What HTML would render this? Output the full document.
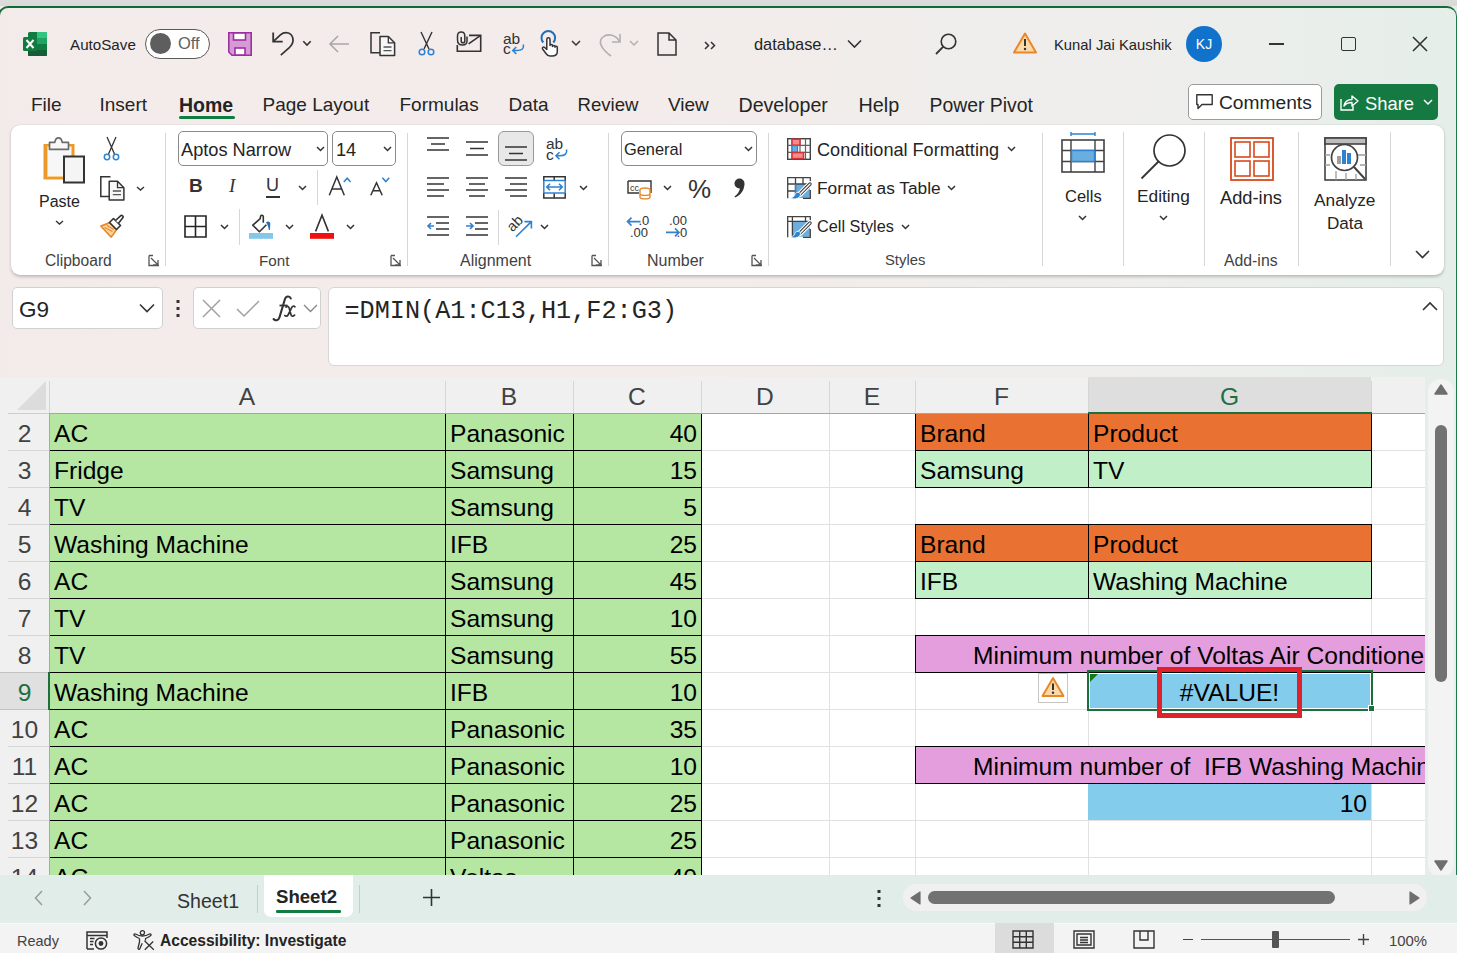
<!DOCTYPE html>
<html><head><meta charset="utf-8">
<style>
*{margin:0;padding:0;box-sizing:border-box}
html,body{width:1457px;height:953px;overflow:hidden;background:#f1eeec;font-family:"Liberation Sans",sans-serif;color:#242424}
.a{position:absolute;white-space:nowrap}
#bg{position:absolute;left:0;top:0;width:1457px;height:953px;background:linear-gradient(90deg,#f3ebea 0%,#f3ecea 12%,#f3ecea 45%,#f0edeb 62%,#eeeeec 80%,#eaeeeb 90%,#e5eee9 100%)}
#topband{position:absolute;left:0;top:0;width:1457px;height:6px;background:linear-gradient(#dddcd9,#d9d9dc)}
#frame{position:absolute;left:-2px;top:6px;width:1459px;height:960px;border:2px solid #116b35;border-right:1.5px solid #1f7a48;border-radius:10px 10px 0 0;border-bottom:none}
#ribbon{position:absolute;left:11px;top:125px;width:1433px;height:150px;background:#fff;border-radius:9px;box-shadow:0 1.5px 3px rgba(0,0,0,.2),0 0 1px rgba(0,0,0,.12)}
.tab{position:absolute;top:93.5px;font-size:19px;color:#242424}
.sep{position:absolute;width:1px;background:#d6d6d6}
.glabel{position:absolute;top:252px;font-size:15.5px;color:#424242}
.chev{position:absolute}
svg{position:absolute;overflow:visible}
.ct{font-size:24.6px;line-height:37px;padding-top:2px;color:#000}
.hdr{font-size:24.6px;line-height:37px;padding-top:2px}
</style></head><body>
<div id="bg"></div>
<div id="topband"></div>
<div id="frame"></div>

<!-- Title bar -->
<svg style="left:23px;top:32px" width="24" height="24" viewBox="0 0 24 24">
  <rect x="5" y="0" width="19" height="24" rx="1.5" fill="#107c41"/>
  <rect x="14" y="0" width="10" height="6" fill="#33c481"/>
  <rect x="14" y="6" width="10" height="6" fill="#21a366"/>
  <rect x="14" y="12" width="10" height="6" fill="#107c41"/>
  <rect x="5" y="18" width="19" height="6" rx="1" fill="#185c37"/>
  <rect x="0" y="5" width="14" height="14" rx="1.5" fill="#107c41"/>
  <path d="M3.5 8 L10.5 16 M10.5 8 L3.5 16" stroke="#fff" stroke-width="2"/>
</svg>
<div class="a" style="left:70px;top:35.5px;font-size:15.2px;color:#242424">AutoSave</div>
<div class="a" style="left:145px;top:29px;width:65px;height:30px;border:1px solid #5a5a5a;border-radius:15px;background:#fff"></div>
<div class="a" style="left:150px;top:33px;width:21px;height:21px;border-radius:50%;background:#5e5e5e"></div>
<div class="a" style="left:178px;top:34px;font-size:16.5px;color:#616161">Off</div>
<svg style="left:228px;top:32px" width="24" height="24" viewBox="0 0 24 24">
  <path d="M0.8 0.8 H23.2 V23.2 H4 L0.8 20 Z" fill="#d89ad6" stroke="#9b30a0" stroke-width="1.6"/>
  <rect x="5.5" y="1" width="12" height="7" fill="#fff" stroke="#9b30a0" stroke-width="1.6"/>
  <rect x="7" y="16" width="10" height="7" fill="#fff" stroke="#9b30a0" stroke-width="1.6"/>
</svg>
<svg style="left:272px;top:32px" width="24" height="25" viewBox="0 0 24 25"><path d="M1.2 0.5 V9.7 H10.7" fill="none" stroke="#333" stroke-width="1.8"/><path d="M1.2 9.7 L8.4 2.8 C13 -1 21 0 21 8.5 C21 11.5 19.5 13.5 17 16 L8.8 23.2" fill="none" stroke="#333" stroke-width="1.7"/></svg>
<svg style="left:302px;top:40px" width="10" height="7" viewBox="0 0 10 7"><path d="M1.3 1.3 L5 5 L8.7 1.3" fill="none" stroke="#333" stroke-width="1.6"/></svg>
<svg style="left:328px;top:34px" width="22" height="20" viewBox="0 0 22 20"><path d="M21 10 H2 M10 2 L2 10 L10 18" fill="none" stroke="#a8a8a8" stroke-width="1.6"/></svg>
<svg style="left:370px;top:32px" width="26" height="25" viewBox="0 0 26 25"><path d="M10 0.8 H1 V20.8 H10" fill="none" stroke="#333" stroke-width="1.5"/><path d="M10 4.5 H18.3 L24.6 10.8 V23.6 H10 Z" fill="#f7f7f7" stroke="#333" stroke-width="1.5" stroke-linejoin="round"/><path d="M18.3 4.5 V10.8 H24.6" fill="none" stroke="#333" stroke-width="1.3"/><path d="M13.5 15 H21.5 M13.5 18.6 H21.5" stroke="#555" stroke-width="1.3"/></svg>
<svg style="left:418px;top:32px" width="17" height="24" viewBox="0 0 17 24">
  <path d="M3 0 L11 17 M14 0 L6 17" fill="none" stroke="#333" stroke-width="1.4"/>
  <circle cx="4" cy="20" r="2.8" fill="none" stroke="#2f82d0" stroke-width="1.5"/>
  <circle cx="13" cy="20" r="2.8" fill="none" stroke="#2f82d0" stroke-width="1.5"/>
</svg>
<svg style="left:456px;top:31px" width="26" height="22" viewBox="0 0 26 22"><path d="M1.3 14 V20.2 H24.7 V4.4 H13" fill="none" stroke="#333" stroke-width="1.6"/><path d="M12.6 12.8 L24 4.8" stroke="#333" stroke-width="1.6"/><path d="M11 5.5 V10 C11 13 9.5 14 6.5 14 C3.5 14 1.5 12 1.5 9 V5 C1.5 2.5 3 1 5.3 1 C7.5 1 8.8 2.5 8.8 5 V10 C8.8 11 8 11.8 7 11.8 C6 11.8 5.2 11 5.2 10 V6" fill="none" stroke="#333" stroke-width="1.5"/></svg>
<svg style="left:503px;top:32px" width="23" height="26" viewBox="0 0 23 26"><text x="0" y="11.6" font-size="15.5" font-family="Liberation Sans" fill="#333">ab</text><text x="0" y="22.4" font-size="15.5" font-family="Liberation Sans" fill="#333">c</text><path d="M20.3 12.5 C21.3 16.5 19 18.5 14 18.5 H10 M13.3 15 L9.8 18.5 L13.3 22" fill="none" stroke="#2f82d0" stroke-width="1.6"/></svg>
<svg style="left:539px;top:30px" width="20" height="27" viewBox="0 0 20 27"><path d="M4.3 12.5 A 6.8 6.8 0 1 1 14.3 12.5" fill="none" stroke="#1f6fb8" stroke-width="2"/><path d="M7.8 9.5 C7.8 7.3 11 7.3 11 9.5 V15.5 C11 14 13.5 14 13.5 15.5 V16.5 C13.5 15 16 15 16 16.5 V17.2 C16 15.8 18.3 15.8 18.3 17.3 V21.5 C18.3 24.5 16 26 13 26 H11 C9 26 8 25 7 23.5 L3.6 19 C2.8 17.8 4.4 16.4 5.7 17.5 L7.8 19.5 Z" fill="#fff" stroke="#333" stroke-width="1.5" stroke-linejoin="round"/></svg>
<svg style="left:571px;top:40px" width="10" height="6" viewBox="0 0 10 6"><path d="M1 1 L5 5 L9 1" fill="none" stroke="#333" stroke-width="1.5"/></svg>
<svg style="left:599px;top:32px" width="22" height="24" viewBox="0 0 22 24">
  <path d="M21 2 V10 H13" fill="none" stroke="#b0b0b0" stroke-width="1.6"/>
  <path d="M20.5 9.5 C17 3 9 1 4 5 C-1 9 1 16 12 24" fill="none" stroke="#b0b0b0" stroke-width="1.6"/>
</svg>
<svg style="left:629px;top:40px" width="10" height="6" viewBox="0 0 10 6"><path d="M1 1 L5 5 L9 1" fill="none" stroke="#b0b0b0" stroke-width="1.5"/></svg>
<svg style="left:657px;top:32px" width="20" height="24" viewBox="0 0 20 24">
  <path d="M1 1 H12 L19 8 V23 H1 Z M12 1 V8 H19" fill="none" stroke="#333" stroke-width="1.5"/>
</svg>
<svg style="left:704px;top:41px" width="12" height="9" viewBox="0 0 12 9"><path d="M1 1 L4.5 4.5 L1 8 M7 1 L10.5 4.5 L7 8" fill="none" stroke="#333" stroke-width="1.5"/></svg>
<div class="a" style="left:754px;top:35px;font-size:16.4px;color:#242424">database…</div>
<svg style="left:847px;top:39px" width="15" height="10" viewBox="0 0 15 10"><path d="M1 1.5 L7.5 8 L14 1.5" fill="none" stroke="#333" stroke-width="1.6"/></svg>
<svg style="left:935px;top:33px" width="22" height="22" viewBox="0 0 22 22">
  <circle cx="13.5" cy="8.5" r="7.3" fill="none" stroke="#333" stroke-width="1.6"/>
  <path d="M8.3 13.7 L1 21" stroke="#333" stroke-width="1.8"/>
</svg>
<svg style="left:1013px;top:32px" width="24" height="22" viewBox="0 0 24 22">
  <path d="M12 1.5 L23 20.5 H1 Z" fill="#fbd9a8" stroke="#e8882a" stroke-width="2" stroke-linejoin="round"/>
  <path d="M12 7 V14" stroke="#333" stroke-width="2"/><circle cx="12" cy="17" r="1.2" fill="#333"/>
</svg>
<div class="a" style="left:1054px;top:37px;font-size:14.8px;color:#242424">Kunal Jai Kaushik</div>
<div class="a" style="left:1186px;top:26px;width:36px;height:36px;border-radius:50%;background:#1172cc;color:#fff;font-size:14px;line-height:36px;text-align:center">KJ</div>
<div class="a" style="left:1269px;top:43px;width:15px;height:1.6px;background:#333"></div>
<div class="a" style="left:1341px;top:37px;width:15px;height:14px;border:1.6px solid #333;border-radius:2px"></div>
<svg style="left:1412px;top:36px" width="16" height="16" viewBox="0 0 16 16"><path d="M1 1 L15 15 M15 1 L1 15" stroke="#333" stroke-width="1.6"/></svg>

<!-- Comments / Share -->
<div class="a" style="left:1188px;top:84px;width:134px;height:36px;border:1px solid #9a9a9a;border-radius:5px;background:#fff"></div>
<svg style="left:1196px;top:94px" width="17" height="15" viewBox="0 0 17 15"><path d="M0.8 0.8 H16.2 V10.5 H6 L2 14.5 V10.5 H0.8 Z" fill="none" stroke="#333" stroke-width="1.4" stroke-linejoin="round"/></svg>
<div class="a" style="left:1219px;top:92px;font-size:19.2px;color:#242424">Comments</div>
<div class="a" style="left:1334px;top:84px;width:104px;height:36px;border-radius:5px;background:#157a42"></div>
<svg style="left:1340px;top:94px" width="19" height="17" viewBox="0 0 19 17">
  <path d="M1 5 V16 H13 V12" fill="none" stroke="#fff" stroke-width="1.4"/>
  <path d="M4 12 C5 7 8 5.5 12 5.5 V2 L18 7 L12 12 V8.5 C9 8.5 6 9.5 4 12 Z" fill="none" stroke="#fff" stroke-width="1.4" stroke-linejoin="round"/>
</svg>
<div class="a" style="left:1365px;top:92.5px;font-size:18.4px;color:#fff">Share</div>
<svg style="left:1423px;top:99px" width="10" height="6" viewBox="0 0 10 6"><path d="M1 1 L5 5 L9 1" fill="none" stroke="#fff" stroke-width="1.5"/></svg>

<!-- tabs -->
<div class="tab" style="left:31px">File</div>
<div class="tab" style="left:99.5px">Insert</div>
<div class="tab" style="left:179px;font-weight:bold;font-size:19.5px">Home</div>
<div class="a" style="left:179px;top:116px;width:56px;height:3px;background:#107c41;border-radius:2px"></div>
<div class="tab" style="left:262.5px">Page Layout</div>
<div class="tab" style="left:399.5px">Formulas</div>
<div class="tab" style="left:508.5px">Data</div>
<div class="tab" style="left:577.5px;font-size:18.6px">Review</div>
<div class="tab" style="left:668px">View</div>
<div class="tab" style="left:738.5px;font-size:19.6px">Developer</div>
<div class="tab" style="left:858.5px;font-size:19.8px">Help</div>
<div class="tab" style="left:929.5px;font-size:19.4px">Power Pivot</div>

<div id="ribbon"></div>
<!-- Ribbon content -->
<!-- Clipboard -->
<svg style="left:43px;top:137px" width="42" height="46" viewBox="0 0 42 46"><rect x="0.5" y="7" width="31" height="35.5" fill="#eb9a2a"/><rect x="4" y="9.5" width="24.5" height="30" fill="#f7f7f7"/><path d="M4.5 10 V39.5 H28" fill="none" stroke="#fcd08a" stroke-width="1"/><path d="M6.5 12.3 V5.3 H11.8 C12.3 2 13.3 0.8 15.5 0.8 C17.7 0.8 18.7 2 19.2 5.3 H25.5 V12.3 Z" fill="#f7f7f7" stroke="#6b6b6b" stroke-width="1.7" stroke-linejoin="round"/><rect x="21" y="19.5" width="20" height="26" fill="#f5f5f5" stroke="#333" stroke-width="2"/></svg>
<div class="a" style="left:39px;top:192.5px;font-size:16px;color:#242424">Paste</div>
<svg style="left:55px;top:220px" width="9" height="5" viewBox="0 0 9 5"><path d="M1 1 L4.5 4 L8 1" fill="none" stroke="#333" stroke-width="1.4"/></svg>
<svg style="left:103px;top:137px" width="17" height="24" viewBox="0 0 17 24">
  <path d="M4 0 L11.5 17 M13 0 L5.5 17" fill="none" stroke="#333" stroke-width="1.3"/>
  <circle cx="4" cy="20" r="2.7" fill="none" stroke="#2f82d0" stroke-width="1.5"/>
  <circle cx="13" cy="20" r="2.7" fill="none" stroke="#2f82d0" stroke-width="1.5"/>
</svg>
<svg style="left:100px;top:176px" width="25" height="25" viewBox="0 0 25 25"><path d="M10.5 0.8 H0.8 V20.4 H9" fill="none" stroke="#333" stroke-width="1.5"/><path d="M9.2 5.3 H17.5 L23.9 11.7 V23.9 H9.2 Z" fill="#f7f7f7" stroke="#333" stroke-width="1.5" stroke-linejoin="round"/><path d="M17.5 5.3 V11.7 H23.9" fill="none" stroke="#333" stroke-width="1.3"/><path d="M12.8 15 H21 M12.8 18.6 H21" stroke="#555" stroke-width="1.3"/></svg>
<svg style="left:136px;top:186px" width="9" height="5" viewBox="0 0 9 5"><path d="M1 1 L4.5 4 L8 1" fill="none" stroke="#333" stroke-width="1.4"/></svg>
<svg style="left:99px;top:214px" width="26" height="25" viewBox="0 0 26 25"><path d="M1.8 12 C5.5 11 8 10 10.5 8.5 L17.5 15.5 C16 18 14.5 21 12 23 Z" fill="#fcd59e" stroke="#e8882a" stroke-width="1.7" stroke-linejoin="round"/><path d="M5.5 13.5 L13.5 17.5 M8 11.5 L15 15.5" stroke="#e8882a" stroke-width="1.1"/><path d="M10.5 8.5 L14.5 4.5 L21.5 11.5 L17.5 15.5 Z" fill="#fff" stroke="#333" stroke-width="1.6" stroke-linejoin="round"/><path d="M16.5 6.5 L21.8 1.6 C22.8 0.7 24.9 2.6 24 3.6 L19.5 9.2" fill="#fff" stroke="#333" stroke-width="1.6" stroke-linejoin="round"/></svg>
<div class="glabel" style="left:45px;font-size:15.6px">Clipboard</div>
<svg style="left:148px;top:255px" width="12" height="11" viewBox="0 0 12 11"><path d="M1 0.5 V10.5 H11 M1 0.5 H5 M3 3 L10 10 M10 5 V10 H5" fill="none" stroke="#555" stroke-width="1.3"/></svg>
<div class="sep" style="left:165px;top:133px;height:133px"></div>

<!-- Font -->
<div class="a" style="left:178px;top:131px;width:150px;height:35px;border:1px solid #8a8a8a;border-radius:5px;background:#fff"></div>
<div class="a" style="left:181px;top:140px;font-size:18.2px;color:#242424">Aptos Narrow</div>
<svg style="left:316px;top:146px" width="9" height="6" viewBox="0 0 9 6"><path d="M1 1 L4.5 4.5 L8 1" fill="none" stroke="#333" stroke-width="1.5"/></svg>
<div class="a" style="left:332px;top:131px;width:64px;height:35px;border:1px solid #8a8a8a;border-radius:5px;background:#fff"></div>
<div class="a" style="left:336px;top:140px;font-size:18.2px;color:#242424">14</div>
<svg style="left:383px;top:146px" width="9" height="6" viewBox="0 0 9 6"><path d="M1 1 L4.5 4.5 L8 1" fill="none" stroke="#333" stroke-width="1.5"/></svg>

<div class="a" style="left:189px;top:175px;font-size:19px;font-weight:bold;color:#333">B</div>
<div class="a" style="left:229px;top:175px;font-size:19px;font-style:italic;font-family:'Liberation Serif';color:#333">I</div>
<div class="a" style="left:266px;top:175px;font-size:18px;color:#333">U</div>
<div class="a" style="left:266px;top:196px;width:14px;height:1.5px;background:#333"></div>
<svg style="left:298px;top:185px" width="9" height="6" viewBox="0 0 9 6"><path d="M1 1 L4.5 4.5 L8 1" fill="none" stroke="#333" stroke-width="1.5"/></svg>
<div class="sep" style="left:317px;top:170px;height:35px"></div>
<svg style="left:320px;top:170px" width="75" height="30" viewBox="320 170 75 30"><path d="M329.3 195.2 L336.8 177 L344.3 195.2 M331.8 189 H341.8" fill="none" stroke="#333" stroke-width="1.5"/><path d="M343.8 182 L347.2 178.2 L350.6 182" fill="none" stroke="#2f82d0" stroke-width="1.5"/><path d="M370.8 195.2 L376.5 182.8 L382.2 195.2 M372.8 190.8 H380.2" fill="none" stroke="#333" stroke-width="1.5"/><path d="M382.4 177.8 L385.8 181.6 L389.2 177.8" fill="none" stroke="#2f82d0" stroke-width="1.5"/></svg>

<svg style="left:184px;top:215px" width="23" height="23" viewBox="0 0 23 23"><path d="M1 1 H22 V22 H1 Z M11.5 1 V22 M1 11.5 H22" fill="none" stroke="#242424" stroke-width="1.6"/></svg>
<svg style="left:220px;top:224px" width="9" height="6" viewBox="0 0 9 6"><path d="M1 1 L4.5 4.5 L8 1" fill="none" stroke="#333" stroke-width="1.5"/></svg>
<div class="sep" style="left:239px;top:209px;height:36px"></div>
<svg style="left:248px;top:214px" width="26" height="25" viewBox="0 0 26 25"><path d="M15.3 8.8 V2.6 C15.3 1 13.3 0.8 12.6 2.2 L12.2 4.6 L4.8 11.2 L11.4 17.8 L18.4 10.8" fill="none" stroke="#333" stroke-width="1.6" stroke-linejoin="round"/><path d="M18 8.5 C20 6.5 22.5 7.5 22.3 10.5 L21.8 16 L20.8 16 C20.5 13 19.8 11 18 8.5 Z" fill="#1c6fb8"/><rect x="1" y="19" width="24" height="5.8" fill="#83c8e8"/></svg>
<svg style="left:285px;top:224px" width="9" height="6" viewBox="0 0 9 6"><path d="M1 1 L4.5 4.5 L8 1" fill="none" stroke="#333" stroke-width="1.5"/></svg>
<svg style="left:310px;top:214px" width="25" height="25" viewBox="0 0 25 25"><path d="M5.6 17.4 L12 1.2 L18.4 17.4" fill="none" stroke="#333" stroke-width="1.6"/><rect x="0" y="19" width="24" height="5.8" fill="#f01010"/></svg>
<svg style="left:346px;top:224px" width="9" height="6" viewBox="0 0 9 6"><path d="M1 1 L4.5 4.5 L8 1" fill="none" stroke="#333" stroke-width="1.5"/></svg>
<div class="glabel" style="left:259px;font-size:15.2px">Font</div>
<svg style="left:390px;top:255px" width="12" height="11" viewBox="0 0 12 11"><path d="M1 0.5 V10.5 H11 M1 0.5 H5 M3 3 L10 10 M10 5 V10 H5" fill="none" stroke="#555" stroke-width="1.3"/></svg>
<div class="sep" style="left:407px;top:133px;height:133px"></div>

<!-- Alignment -->
<svg style="left:427px;top:137px" width="22" height="14" viewBox="0 0 22 14"><path d="M0 1 H22 M4 7 H18 M0 13 H22" stroke="#333" stroke-width="1.6"/></svg>
<svg style="left:466px;top:141px" width="22" height="15" viewBox="0 0 22 15"><path d="M0 1 H22 M4 7.5 H18 M0 14 H22" stroke="#333" stroke-width="1.6"/></svg>
<div class="a" style="left:498px;top:131px;width:36px;height:35px;border:1px solid #9a9a9a;border-radius:6px;background:#e8e8e8"></div>
<svg style="left:505px;top:146px" width="22" height="15" viewBox="0 0 22 15"><path d="M0 1 H22 M4 7.5 H18 M0 14 H22" stroke="#333" stroke-width="1.6"/></svg>
<svg style="left:546px;top:137px" width="23" height="26" viewBox="0 0 23 26"><text x="0" y="11.5" font-size="15.5" font-family="Liberation Sans" fill="#333">ab</text><text x="0" y="22.7" font-size="15.5" font-family="Liberation Sans" fill="#333">c</text><path d="M20.5 12.5 C21.5 16.5 19 18.8 14 18.8 H10 M13.5 15.3 L10 18.8 L13.5 22.3" fill="none" stroke="#2f82d0" stroke-width="1.6"/></svg>
<svg style="left:427px;top:177px" width="22" height="20" viewBox="0 0 22 20"><path d="M0 1 H22 M0 7 H17 M0 13 H22 M0 19 H17" stroke="#333" stroke-width="1.6"/></svg>
<svg style="left:466px;top:177px" width="22" height="20" viewBox="0 0 22 20"><path d="M0 1 H22 M3 7 H19 M0 13 H22 M3 19 H19" stroke="#333" stroke-width="1.6"/></svg>
<svg style="left:505px;top:177px" width="22" height="20" viewBox="0 0 22 20"><path d="M0 1 H22 M5 7 H22 M0 13 H22 M5 19 H22" stroke="#333" stroke-width="1.6"/></svg>
<svg style="left:543px;top:176px" width="23" height="23" viewBox="0 0 23 23"><path d="M0.8 5 V0.8 H22.2 V5 M0.8 17 V21.9 H22.2 V17 M11.2 0.8 V4.5 M11.2 17.2 V21.9" fill="none" stroke="#333" stroke-width="1.5"/><path d="M0.8 4.5 H22.2 M0.8 17 H22.2 M0.8 4.5 V17 M22.2 4.5 V17" fill="none" stroke="#2f82d0" stroke-width="1.5"/><path d="M3.8 11 H19.2 M7 7.8 L3.8 11 L7 14.2 M16 7.8 L19.2 11 L16 14.2" fill="none" stroke="#2f82d0" stroke-width="1.6"/></svg>
<svg style="left:579px;top:185px" width="9" height="6" viewBox="0 0 9 6"><path d="M1 1 L4.5 4.5 L8 1" fill="none" stroke="#333" stroke-width="1.5"/></svg>
<svg style="left:427px;top:216px" width="22" height="20" viewBox="0 0 22 20"><path d="M0 1 H22 M9 7 H22 M9 13 H22 M0 19 H22" stroke="#333" stroke-width="1.6"/><path d="M7 10 H1 M4 7 L1 10 L4 13" fill="none" stroke="#2f82d0" stroke-width="1.6"/></svg>
<svg style="left:466px;top:216px" width="22" height="20" viewBox="0 0 22 20"><path d="M0 1 H22 M9 7 H22 M9 13 H22 M0 19 H22" stroke="#333" stroke-width="1.6"/><path d="M0 10 H7 M4 7 L7 10 L4 13" fill="none" stroke="#2f82d0" stroke-width="1.6"/></svg>
<div class="sep" style="left:498px;top:210px;height:35px"></div>
<svg style="left:505px;top:212px" width="30" height="28" viewBox="0 0 30 28"><text x="0" y="0" font-size="14.5" font-family="Liberation Sans" fill="#333" transform="translate(7.5 20.5) rotate(-45)">ab</text><path d="M11 24.8 L26.4 9.6 M19.4 9.6 H26.4 V16.6" fill="none" stroke="#2f82d0" stroke-width="1.6"/></svg>
<svg style="left:540px;top:224px" width="9" height="6" viewBox="0 0 9 6"><path d="M1 1 L4.5 4.5 L8 1" fill="none" stroke="#333" stroke-width="1.5"/></svg>
<div class="glabel" style="left:460px;font-size:16px">Alignment</div>
<svg style="left:591px;top:255px" width="12" height="11" viewBox="0 0 12 11"><path d="M1 0.5 V10.5 H11 M1 0.5 H5 M3 3 L10 10 M10 5 V10 H5" fill="none" stroke="#555" stroke-width="1.3"/></svg>
<div class="sep" style="left:608px;top:133px;height:133px"></div>

<!-- Number -->
<div class="a" style="left:621px;top:131px;width:136px;height:35px;border:1px solid #8a8a8a;border-radius:6px;background:#fff"></div>
<div class="a" style="left:624px;top:140px;font-size:16.4px;color:#242424">General</div>
<svg style="left:744px;top:146px" width="9" height="6" viewBox="0 0 9 6"><path d="M1 1 L4.5 4.5 L8 1" fill="none" stroke="#333" stroke-width="1.5"/></svg>
<svg style="left:627px;top:180px" width="25" height="20" viewBox="0 0 25 20">
  <path d="M1 1 H24 V13 M1 1 V13 H12" fill="none" stroke="#333" stroke-width="1.4"/>
  <text x="3" y="11" font-size="9" font-family="Liberation Sans" fill="#333">cc</text>
  <ellipse cx="18" cy="10" rx="5" ry="2" fill="#fff" stroke="#e8882a" stroke-width="1.4"/>
  <path d="M13 10 V17 C13 19.5 23 19.5 23 17 V10 M13 13.5 C13 16 23 16 23 13.5" fill="#fff" stroke="#e8882a" stroke-width="1.4"/>
</svg>
<svg style="left:663px;top:185px" width="9" height="6" viewBox="0 0 9 6"><path d="M1 1 L4.5 4.5 L8 1" fill="none" stroke="#333" stroke-width="1.5"/></svg>
<div class="a" style="left:688px;top:174px;font-size:26px;color:#333">%</div>
<svg style="left:733px;top:178px" width="13" height="20" viewBox="0 0 13 20"><circle cx="6.5" cy="5.5" r="5" fill="#333"/><path d="M11.3 6 C11.5 12 8 17 2 19.5 L1.5 18.5 C5 16 7 13 7 9 Z" fill="#333"/></svg>
<svg style="left:626px;top:214px" width="26" height="26" viewBox="0 0 26 26"><text x="12.5" y="11" font-size="13" font-family="Liberation Sans" fill="#333">.0</text><text x="4" y="23" font-size="13" font-family="Liberation Sans" fill="#333">.00</text><path d="M1.5 7.6 H14.5 M5.5 3.6 L1.5 7.6 L5.5 11.6" fill="none" stroke="#2f82d0" stroke-width="1.6"/></svg>
<svg style="left:665px;top:214px" width="26" height="26" viewBox="0 0 26 26"><text x="4" y="11" font-size="13" font-family="Liberation Sans" fill="#333">.00</text><text x="11.5" y="23" font-size="13" font-family="Liberation Sans" fill="#333">.0</text><path d="M1 18.4 H14 M10 14.4 L14 18.4 L10 22.4" fill="none" stroke="#2f82d0" stroke-width="1.6"/></svg>
<div class="glabel" style="left:647px;font-size:16px">Number</div>
<svg style="left:751px;top:255px" width="12" height="11" viewBox="0 0 12 11"><path d="M1 0.5 V10.5 H11 M1 0.5 H5 M3 3 L10 10 M10 5 V10 H5" fill="none" stroke="#555" stroke-width="1.3"/></svg>
<div class="sep" style="left:768px;top:133px;height:133px"></div>

<!-- Styles -->
<svg style="left:787px;top:138px" width="24" height="22" viewBox="0 0 24 22"><rect x="0.7" y="0.7" width="22.6" height="20.6" fill="#fff" stroke="#424242" stroke-width="1.4"/><path d="M0.7 7.3 H23.3 M0.7 14.3 H23.3 M5 0.7 V21.3 M13 0.7 V21.3 M18.5 0.7 V21.3" stroke="#616161" stroke-width="1.2"/><rect x="5" y="1.2" width="8" height="6" fill="#f48a8a" stroke="#d13438" stroke-width="1.5"/><rect x="5" y="7.6" width="5.5" height="6.5" fill="#6aaee0" stroke="#2f82d0" stroke-width="1.2"/><rect x="5" y="14.6" width="11.5" height="6" fill="#f48a8a" stroke="#d13438" stroke-width="1.5"/></svg>
<div class="a" style="left:817px;top:140px;font-size:18.1px;color:#242424">Conditional Formatting</div>
<svg style="left:1007px;top:146px" width="9" height="6" viewBox="0 0 9 6"><path d="M1 1 L4.5 4.5 L8 1" fill="none" stroke="#333" stroke-width="1.5"/></svg>
<svg style="left:787px;top:177px" width="24" height="23" viewBox="0 0 24 23"><rect x="8.5" y="7" width="14.5" height="14" fill="#6aaee0"/><path d="M0.7 21.3 V0.7 H23.3 V8 M23.3 13 V21.3 H16 M0.7 7 H23.3 M0.7 14 H8.5 M8.5 0.7 V21.3 M16 0.7 V7" fill="none" stroke="#424242" stroke-width="1.3"/><path d="M8.5 7 V21.3" stroke="#2f82d0" stroke-width="1.3"/><path d="M23 7 L12.6 17.4" stroke="#fff" stroke-width="5.6" stroke-linecap="round"/><path d="M23 7 L12.6 17.4" stroke="#333" stroke-width="3.4" stroke-linecap="round"/><path d="M23 7 L12.6 17.4" stroke="#fff" stroke-width="1.4" stroke-linecap="round"/><path d="M13.4 16.6 C11.4 14.6 8.6 15.2 8 17.4 C7.4 19.4 6 20.4 3.2 20.8 C5 22.2 8.2 22.2 10.6 21.2 C12.8 20.2 13.8 18.4 13.4 16.6 Z" fill="#2f82d0" stroke="#fff" stroke-width="0.8"/></svg>
<div class="a" style="left:817px;top:178px;font-size:17.3px;color:#242424">Format as Table</div>
<svg style="left:947px;top:185px" width="9" height="6" viewBox="0 0 9 6"><path d="M1 1 L4.5 4.5 L8 1" fill="none" stroke="#333" stroke-width="1.5"/></svg>
<svg style="left:787px;top:216px" width="24" height="23" viewBox="0 0 24 23"><rect x="5.8" y="5.8" width="17.2" height="15" fill="#6aaee0"/><path d="M0.7 21.3 V0.7 H23.3 V8 M23.3 13 V21.3 H16 M0.7 5.4 H23.3 M5.4 0.7 V21.3 M18.5 0.7 V5.4" fill="none" stroke="#424242" stroke-width="1.3"/><path d="M23 7 L12.6 17.4" stroke="#fff" stroke-width="5.6" stroke-linecap="round"/><path d="M23 7 L12.6 17.4" stroke="#333" stroke-width="3.4" stroke-linecap="round"/><path d="M23 7 L12.6 17.4" stroke="#fff" stroke-width="1.4" stroke-linecap="round"/><path d="M13.4 16.6 C11.4 14.6 8.6 15.2 8 17.4 C7.4 19.4 6 20.4 3.2 20.8 C5 22.2 8.2 22.2 10.6 21.2 C12.8 20.2 13.8 18.4 13.4 16.6 Z" fill="#2f82d0" stroke="#fff" stroke-width="0.8"/></svg>
<div class="a" style="left:817px;top:217px;font-size:16.3px;color:#242424">Cell Styles</div>
<svg style="left:901px;top:224px" width="9" height="6" viewBox="0 0 9 6"><path d="M1 1 L4.5 4.5 L8 1" fill="none" stroke="#333" stroke-width="1.5"/></svg>
<div class="glabel" style="left:885px;font-size:14.8px">Styles</div>
<div class="sep" style="left:1042px;top:133px;height:133px"></div>

<!-- Cells -->
<svg style="left:1061px;top:132px" width="44" height="41" viewBox="0 0 44 41">
  <path d="M10 2 H34 M10 0 V4 M34 0 V4" stroke="#2f82d0" stroke-width="1.4"/>
  <rect x="1" y="8" width="42" height="32" fill="#fff" stroke="#424242" stroke-width="1.6"/>
  <path d="M1 18.5 H43 M1 29.5 H43 M10 8 V40 M34 8 V40" stroke="#424242" stroke-width="1.4"/>
  <rect x="10.5" y="18.5" width="23" height="11" fill="#6aaee0" stroke="#2f82d0" stroke-width="1.4"/>
</svg>
<div class="a" style="left:1065px;top:187px;font-size:16.5px;color:#242424">Cells</div>
<svg style="left:1078px;top:215px" width="9" height="6" viewBox="0 0 9 6"><path d="M1 1 L4.5 4.5 L8 1" fill="none" stroke="#333" stroke-width="1.5"/></svg>
<div class="sep" style="left:1123px;top:132px;height:134px"></div>

<!-- Editing -->
<svg style="left:1140px;top:134px" width="47" height="46" viewBox="0 0 47 46">
  <circle cx="29.5" cy="16.5" r="15.5" fill="none" stroke="#333" stroke-width="1.7"/>
  <path d="M18.5 27.5 L1.5 44.5" stroke="#333" stroke-width="1.8"/>
</svg>
<div class="a" style="left:1137px;top:186px;font-size:17.3px;color:#242424">Editing</div>
<svg style="left:1159px;top:215px" width="9" height="6" viewBox="0 0 9 6"><path d="M1 1 L4.5 4.5 L8 1" fill="none" stroke="#333" stroke-width="1.5"/></svg>
<div class="sep" style="left:1204px;top:132px;height:134px"></div>

<!-- Add-ins -->
<svg style="left:1230px;top:137px" width="44" height="44" viewBox="0 0 44 44">
  <rect x="1" y="1" width="42" height="42" fill="#fff" stroke="#d84a1b" stroke-width="1.8"/>
  <rect x="5" y="5" width="15" height="15" fill="none" stroke="#d84a1b" stroke-width="1.6"/>
  <rect x="24" y="5" width="15" height="15" fill="none" stroke="#d84a1b" stroke-width="1.6"/>
  <rect x="5" y="24" width="15" height="15" fill="none" stroke="#d84a1b" stroke-width="1.6"/>
  <rect x="24" y="24" width="15" height="15" fill="none" stroke="#d84a1b" stroke-width="1.6"/>
</svg>
<div class="a" style="left:1220px;top:187px;font-size:18.3px;color:#242424">Add-ins</div>
<div class="glabel" style="left:1224px;font-size:15.8px">Add-ins</div>
<div class="sep" style="left:1298px;top:132px;height:134px"></div>

<!-- Analyze Data -->
<svg style="left:1324px;top:137px" width="43" height="44" viewBox="0 0 43 44">
  <rect x="1" y="1" width="41" height="42" fill="#fff" stroke="#424242" stroke-width="1.6"/>
  <rect x="1" y="1" width="41" height="6" fill="#bdbdbd" stroke="#424242" stroke-width="1.6"/>
  <path d="M1 18 H6 M34 18 H42 M1 28 H6 M36 28 H42 M12 34 V43 M22 36 V43 M32 37 V43" stroke="#9e9e9e" stroke-width="1.3"/>
  <circle cx="20.5" cy="20.5" r="13" fill="#fff" stroke="#424242" stroke-width="1.7"/>
  <path d="M30 30 L41 42" stroke="#424242" stroke-width="2"/>
  <rect x="13" y="19" width="4" height="8" fill="#9e9e9e"/>
  <rect x="18" y="13" width="4" height="14" fill="#2f82d0"/>
  <rect x="23" y="16" width="4" height="11" fill="#2f82d0"/>
</svg>
<div class="a" style="left:1314px;top:189.5px;font-size:17.3px;color:#242424">Analyze</div>
<div class="a" style="left:1327px;top:213.5px;font-size:17.1px;color:#242424">Data</div>
<div class="sep" style="left:1390px;top:132px;height:134px"></div>
<svg style="left:1415px;top:250px" width="15" height="9" viewBox="0 0 15 9"><path d="M1 1 L7.5 7.5 L14 1" fill="none" stroke="#333" stroke-width="1.6"/></svg>

<!-- Formula bar -->
<div class="a" style="left:12px;top:287px;width:151px;height:42px;border:1px solid #d1d1d1;border-radius:5px;background:#fff"></div>
<div class="a" style="left:19px;top:296.5px;font-size:22.5px;color:#242424">G9</div>
<svg style="left:139px;top:303px" width="16" height="10" viewBox="0 0 16 10"><path d="M1 1.5 L8 8.5 L15 1.5" fill="none" stroke="#333" stroke-width="1.6"/></svg>
<svg style="left:176px;top:300px" width="4" height="17" viewBox="0 0 4 17"><rect x="0.5" y="0" width="3" height="3" fill="#333"/><rect x="0.5" y="7" width="3" height="3" fill="#333"/><rect x="0.5" y="14" width="3" height="3" fill="#333"/></svg>
<div class="a" style="left:193px;top:287px;width:128px;height:42px;border:1px solid #d1d1d1;border-radius:5px;background:#fff"></div>
<svg style="left:202px;top:299px" width="19" height="19" viewBox="0 0 19 19"><path d="M1 1 L18 18 M18 1 L1 18" stroke="#a0a0a0" stroke-width="1.5"/></svg>
<svg style="left:236px;top:300px" width="24" height="17" viewBox="0 0 24 17"><path d="M1 9 L8 16 L23 1" fill="none" stroke="#a0a0a0" stroke-width="1.5"/></svg>
<svg style="left:272px;top:295px" width="24" height="27" viewBox="0 0 24 27"><path d="M18.8 3.5 C17.8 0.8 14 0.6 12.8 4.5 L7.6 22 C6.6 25.8 3.2 26 1.6 24" fill="none" stroke="#333" stroke-width="2.1" stroke-linecap="round"/><path d="M7.5 10.5 H15.5" stroke="#333" stroke-width="1.8"/><path d="M14 12.2 C15.5 10.6 16.8 11.4 17.3 13.5 L18.9 19.5 C19.4 21.5 20.9 21.8 22.6 20.2 M23 11.8 C21.6 10.7 20.6 11.3 19.7 12.6 L16.3 19.5 C15.3 21.4 13.9 21.6 12.8 20.5" fill="none" stroke="#333" stroke-width="1.7" stroke-linecap="round"/></svg>
<svg style="left:303px;top:304px" width="15" height="9" viewBox="0 0 15 9"><path d="M1 1 L7.5 7.5 L14 1" fill="none" stroke="#888" stroke-width="1.4"/></svg>
<div class="a" style="left:328px;top:287px;width:1116px;height:79px;border:1px solid #d6d6d6;border-radius:6px;background:#fff"></div>
<div class="a" style="left:344.5px;top:296.5px;font-family:'Liberation Mono',monospace;font-size:25.2px;color:#242424">=DMIN(A1:C13,H1,F2:G3)</div>
<svg style="left:1422px;top:301px" width="16" height="10" viewBox="0 0 16 10"><path d="M1 9 L8 2 L15 9" fill="none" stroke="#333" stroke-width="1.6"/></svg>
<!-- Grid -->
<div class="a" style="left:0;top:377px;width:1425px;height:498px;background:#fff;overflow:hidden">
<div class="a" style="left:0;top:0;width:1425px;height:36px;background:#f0f0f0"></div>
<div class="a" style="left:0;top:0;width:49px;height:498px;background:#f0f0f0"></div>
<div class="a" style="left:1088px;top:0;width:283px;height:36px;background:#dedede"></div>
<div class="a" style="left:49px;top:36px;width:1376px;height:1px;background:#e1e1e1"></div>
<div class="a" style="left:49px;top:73px;width:1376px;height:1px;background:#e1e1e1"></div>
<div class="a" style="left:49px;top:110px;width:1376px;height:1px;background:#e1e1e1"></div>
<div class="a" style="left:49px;top:147px;width:1376px;height:1px;background:#e1e1e1"></div>
<div class="a" style="left:49px;top:184px;width:1376px;height:1px;background:#e1e1e1"></div>
<div class="a" style="left:49px;top:221px;width:1376px;height:1px;background:#e1e1e1"></div>
<div class="a" style="left:49px;top:258px;width:1376px;height:1px;background:#e1e1e1"></div>
<div class="a" style="left:49px;top:295px;width:1376px;height:1px;background:#e1e1e1"></div>
<div class="a" style="left:49px;top:332px;width:1376px;height:1px;background:#e1e1e1"></div>
<div class="a" style="left:49px;top:369px;width:1376px;height:1px;background:#e1e1e1"></div>
<div class="a" style="left:49px;top:406px;width:1376px;height:1px;background:#e1e1e1"></div>
<div class="a" style="left:49px;top:443px;width:1376px;height:1px;background:#e1e1e1"></div>
<div class="a" style="left:49px;top:480px;width:1376px;height:1px;background:#e1e1e1"></div>
<div class="a" style="left:49px;top:517px;width:1376px;height:1px;background:#e1e1e1"></div>
<div class="a" style="left:445px;top:36px;width:1px;height:462px;background:#e1e1e1"></div>
<div class="a" style="left:573px;top:36px;width:1px;height:462px;background:#e1e1e1"></div>
<div class="a" style="left:701px;top:36px;width:1px;height:462px;background:#e1e1e1"></div>
<div class="a" style="left:829px;top:36px;width:1px;height:462px;background:#e1e1e1"></div>
<div class="a" style="left:915px;top:36px;width:1px;height:462px;background:#e1e1e1"></div>
<div class="a" style="left:1088px;top:36px;width:1px;height:462px;background:#e1e1e1"></div>
<div class="a" style="left:1371px;top:36px;width:1px;height:462px;background:#e1e1e1"></div>
<div class="a" style="left:1425px;top:36px;width:1px;height:462px;background:#e1e1e1"></div>
<div class="a" style="left:49px;top:36px;width:652px;height:462px;background:#b5e6a2"></div>
<div class="a" style="left:915px;top:36px;width:456px;height:37px;background:#e97132"></div>
<div class="a" style="left:915px;top:73px;width:456px;height:37px;background:#c1f0c8"></div>
<div class="a" style="left:915px;top:147px;width:456px;height:37px;background:#e97132"></div>
<div class="a" style="left:915px;top:184px;width:456px;height:37px;background:#c1f0c8"></div>
<div class="a" style="left:915px;top:258px;width:510px;height:37px;background:#e59edd"></div>
<div class="a" style="left:1088px;top:295px;width:283px;height:37px;background:#83cceb"></div>
<div class="a" style="left:915px;top:369px;width:510px;height:37px;background:#e59edd"></div>
<div class="a" style="left:1088px;top:406px;width:283px;height:37px;background:#83cceb"></div>
<div class="a" style="left:49px;top:73px;width:653px;height:1px;background:#000"></div>
<div class="a" style="left:49px;top:110px;width:653px;height:1px;background:#000"></div>
<div class="a" style="left:49px;top:147px;width:653px;height:1px;background:#000"></div>
<div class="a" style="left:49px;top:184px;width:653px;height:1px;background:#000"></div>
<div class="a" style="left:49px;top:221px;width:653px;height:1px;background:#000"></div>
<div class="a" style="left:49px;top:258px;width:653px;height:1px;background:#000"></div>
<div class="a" style="left:49px;top:295px;width:653px;height:1px;background:#000"></div>
<div class="a" style="left:49px;top:332px;width:653px;height:1px;background:#000"></div>
<div class="a" style="left:49px;top:369px;width:653px;height:1px;background:#000"></div>
<div class="a" style="left:49px;top:406px;width:653px;height:1px;background:#000"></div>
<div class="a" style="left:49px;top:443px;width:653px;height:1px;background:#000"></div>
<div class="a" style="left:49px;top:480px;width:653px;height:1px;background:#000"></div>
<div class="a" style="left:445px;top:36px;width:1px;height:463px;background:#000"></div>
<div class="a" style="left:573px;top:36px;width:1px;height:463px;background:#000"></div>
<div class="a" style="left:701px;top:36px;width:1px;height:463px;background:#000"></div>
<div class="a" style="left:915px;top:36px;width:457px;height:1px;background:#000"></div>
<div class="a" style="left:915px;top:73px;width:457px;height:1px;background:#000"></div>
<div class="a" style="left:915px;top:110px;width:457px;height:1px;background:#000"></div>
<div class="a" style="left:915px;top:36px;width:1px;height:75px;background:#000"></div>
<div class="a" style="left:1088px;top:36px;width:1px;height:75px;background:#000"></div>
<div class="a" style="left:1371px;top:36px;width:1px;height:75px;background:#000"></div>
<div class="a" style="left:915px;top:147px;width:457px;height:1px;background:#000"></div>
<div class="a" style="left:915px;top:184px;width:457px;height:1px;background:#000"></div>
<div class="a" style="left:915px;top:221px;width:457px;height:1px;background:#000"></div>
<div class="a" style="left:915px;top:147px;width:1px;height:75px;background:#000"></div>
<div class="a" style="left:1088px;top:147px;width:1px;height:75px;background:#000"></div>
<div class="a" style="left:1371px;top:147px;width:1px;height:75px;background:#000"></div>
<div class="a" style="left:915px;top:258px;width:511px;height:1px;background:#000"></div>
<div class="a" style="left:915px;top:295px;width:511px;height:1px;background:#000"></div>
<div class="a" style="left:915px;top:258px;width:1px;height:38px;background:#000"></div>
<div class="a" style="left:915px;top:369px;width:511px;height:1px;background:#000"></div>
<div class="a" style="left:915px;top:406px;width:511px;height:1px;background:#000"></div>
<div class="a" style="left:915px;top:369px;width:1px;height:38px;background:#000"></div>
<div class="a" style="left:8px;top:36px;width:41px;height:1px;background:#cdcdcd"></div>
<div class="a" style="left:49px;top:36px;width:1376px;height:1px;background:#a6a6a6"></div>
<div class="a" style="left:49px;top:4px;width:1px;height:32px;background:#d4d4d4"></div>
<div class="a" style="left:49px;top:36px;width:1px;height:462px;background:#a8a8a8"></div>
<div class="a" style="left:445px;top:4px;width:1px;height:32px;background:#d6d6d6"></div>
<div class="a" style="left:573px;top:4px;width:1px;height:32px;background:#d6d6d6"></div>
<div class="a" style="left:701px;top:4px;width:1px;height:32px;background:#d6d6d6"></div>
<div class="a" style="left:829px;top:4px;width:1px;height:32px;background:#d6d6d6"></div>
<div class="a" style="left:915px;top:4px;width:1px;height:32px;background:#d6d6d6"></div>
<div class="a" style="left:1088px;top:4px;width:1px;height:32px;background:#d6d6d6"></div>
<div class="a" style="left:1371px;top:4px;width:1px;height:32px;background:#d6d6d6"></div>
<div class="a" style="left:1425px;top:4px;width:1px;height:32px;background:#d6d6d6"></div>
<div class="a" style="left:8px;top:73px;width:41px;height:1px;background:#d6d6d6"></div>
<div class="a" style="left:8px;top:110px;width:41px;height:1px;background:#d6d6d6"></div>
<div class="a" style="left:8px;top:147px;width:41px;height:1px;background:#d6d6d6"></div>
<div class="a" style="left:8px;top:184px;width:41px;height:1px;background:#d6d6d6"></div>
<div class="a" style="left:8px;top:221px;width:41px;height:1px;background:#d6d6d6"></div>
<div class="a" style="left:8px;top:258px;width:41px;height:1px;background:#d6d6d6"></div>
<div class="a" style="left:8px;top:295px;width:41px;height:1px;background:#d6d6d6"></div>
<div class="a" style="left:8px;top:332px;width:41px;height:1px;background:#d6d6d6"></div>
<div class="a" style="left:8px;top:369px;width:41px;height:1px;background:#d6d6d6"></div>
<div class="a" style="left:8px;top:406px;width:41px;height:1px;background:#d6d6d6"></div>
<div class="a" style="left:8px;top:443px;width:41px;height:1px;background:#d6d6d6"></div>
<div class="a" style="left:8px;top:480px;width:41px;height:1px;background:#d6d6d6"></div>
<div class="a" style="left:1088px;top:35px;width:284px;height:2px;background:#1e6f3e"></div>
<svg style="left:17px;top:4px" width="29" height="29" viewBox="0 0 29 29"><path d="M29 0 V29 H0 Z" fill="#dcdcdc"/></svg>
<div class="a hdr" style="left:49px;top:-1.5px;width:396px;text-align:center;color:#424242">A</div>
<div class="a hdr" style="left:445px;top:-1.5px;width:128px;text-align:center;color:#424242">B</div>
<div class="a hdr" style="left:573px;top:-1.5px;width:128px;text-align:center;color:#424242">C</div>
<div class="a hdr" style="left:701px;top:-1.5px;width:128px;text-align:center;color:#424242">D</div>
<div class="a hdr" style="left:829px;top:-1.5px;width:86px;text-align:center;color:#424242">E</div>
<div class="a hdr" style="left:915px;top:-1.5px;width:173px;text-align:center;color:#424242">F</div>
<div class="a hdr" style="left:1088px;top:-1.5px;width:283px;text-align:center;color:#1e6f3e">G</div>
<div class="a" style="left:0;top:295px;width:49px;height:37px;background:#e0e0e0"></div>
<div class="a" style="left:0;top:295px;width:49px;height:1px;background:#c2c2c2"></div>
<div class="a" style="left:0;top:332px;width:49px;height:1px;background:#c2c2c2"></div>
<div class="a" style="left:48px;top:295px;width:2px;height:38px;background:#1e6f3e"></div>
<div class="a hdr" style="left:0;top:36px;width:49px;text-align:center;color:#424242">2</div>
<div class="a hdr" style="left:0;top:73px;width:49px;text-align:center;color:#424242">3</div>
<div class="a hdr" style="left:0;top:110px;width:49px;text-align:center;color:#424242">4</div>
<div class="a hdr" style="left:0;top:147px;width:49px;text-align:center;color:#424242">5</div>
<div class="a hdr" style="left:0;top:184px;width:49px;text-align:center;color:#424242">6</div>
<div class="a hdr" style="left:0;top:221px;width:49px;text-align:center;color:#424242">7</div>
<div class="a hdr" style="left:0;top:258px;width:49px;text-align:center;color:#424242">8</div>
<div class="a hdr" style="left:0;top:295px;width:49px;text-align:center;color:#1e6f3e">9</div>
<div class="a hdr" style="left:0;top:332px;width:49px;text-align:center;color:#424242">10</div>
<div class="a hdr" style="left:0;top:369px;width:49px;text-align:center;color:#424242">11</div>
<div class="a hdr" style="left:0;top:406px;width:49px;text-align:center;color:#424242">12</div>
<div class="a hdr" style="left:0;top:443px;width:49px;text-align:center;color:#424242">13</div>
<div class="a hdr" style="left:0;top:480px;width:49px;text-align:center;color:#424242">14</div>
<div class="a ct" style="left:54px;top:36px">AC</div>
<div class="a ct" style="left:450px;top:36px">Panasonic</div>
<div class="a ct" style="left:573px;top:36px;width:124px;text-align:right">40</div>
<div class="a ct" style="left:54px;top:73px">Fridge</div>
<div class="a ct" style="left:450px;top:73px">Samsung</div>
<div class="a ct" style="left:573px;top:73px;width:124px;text-align:right">15</div>
<div class="a ct" style="left:54px;top:110px">TV</div>
<div class="a ct" style="left:450px;top:110px">Samsung</div>
<div class="a ct" style="left:573px;top:110px;width:124px;text-align:right">5</div>
<div class="a ct" style="left:54px;top:147px">Washing Machine</div>
<div class="a ct" style="left:450px;top:147px">IFB</div>
<div class="a ct" style="left:573px;top:147px;width:124px;text-align:right">25</div>
<div class="a ct" style="left:54px;top:184px">AC</div>
<div class="a ct" style="left:450px;top:184px">Samsung</div>
<div class="a ct" style="left:573px;top:184px;width:124px;text-align:right">45</div>
<div class="a ct" style="left:54px;top:221px">TV</div>
<div class="a ct" style="left:450px;top:221px">Samsung</div>
<div class="a ct" style="left:573px;top:221px;width:124px;text-align:right">10</div>
<div class="a ct" style="left:54px;top:258px">TV</div>
<div class="a ct" style="left:450px;top:258px">Samsung</div>
<div class="a ct" style="left:573px;top:258px;width:124px;text-align:right">55</div>
<div class="a ct" style="left:54px;top:295px">Washing Machine</div>
<div class="a ct" style="left:450px;top:295px">IFB</div>
<div class="a ct" style="left:573px;top:295px;width:124px;text-align:right">10</div>
<div class="a ct" style="left:54px;top:332px">AC</div>
<div class="a ct" style="left:450px;top:332px">Panasonic</div>
<div class="a ct" style="left:573px;top:332px;width:124px;text-align:right">35</div>
<div class="a ct" style="left:54px;top:369px">AC</div>
<div class="a ct" style="left:450px;top:369px">Panasonic</div>
<div class="a ct" style="left:573px;top:369px;width:124px;text-align:right">10</div>
<div class="a ct" style="left:54px;top:406px">AC</div>
<div class="a ct" style="left:450px;top:406px">Panasonic</div>
<div class="a ct" style="left:573px;top:406px;width:124px;text-align:right">25</div>
<div class="a ct" style="left:54px;top:443px">AC</div>
<div class="a ct" style="left:450px;top:443px">Panasonic</div>
<div class="a ct" style="left:573px;top:443px;width:124px;text-align:right">25</div>
<div class="a ct" style="left:54px;top:480px">AC</div>
<div class="a ct" style="left:450px;top:480px">Voltas</div>
<div class="a ct" style="left:573px;top:480px;width:124px;text-align:right">40</div>
<div class="a ct" style="left:920px;top:36px">Brand</div>
<div class="a ct" style="left:1093px;top:36px">Product</div>
<div class="a ct" style="left:920px;top:73px">Samsung</div>
<div class="a ct" style="left:1093px;top:73px">TV</div>
<div class="a ct" style="left:920px;top:147px">Brand</div>
<div class="a ct" style="left:1093px;top:147px">Product</div>
<div class="a ct" style="left:920px;top:184px">IFB</div>
<div class="a ct" style="left:1093px;top:184px">Washing Machine</div>
<div class="a ct" style="left:973px;top:258px">Minimum number of Voltas Air Conditioners</div>
<div class="a ct" style="left:973px;top:369px">Minimum number of &nbsp;IFB Washing Machines</div>
<div class="a ct" style="left:1088px;top:406px;width:279px;text-align:right">10</div>
<div class="a ct" style="left:1088px;top:295px;width:283px;text-align:center">#VALUE!</div>
<div class="a" style="left:1087px;top:293px;width:286px;height:41px;border:2px solid #1e6f3e"></div>
<div class="a" style="left:1089px;top:296px;width:282px;height:36px;border:1px solid #fff"></div>
<div class="a" style="left:1368px;top:328px;width:7px;height:7px;background:#1e6f3e;border:1px solid #fff"></div>
<svg style="left:1090px;top:297px" width="8" height="8" viewBox="0 0 8 8"><path d="M0 0 H8 L0 8 Z" fill="#107c10"/></svg>
<div class="a" style="left:1038px;top:296px;width:30px;height:30px;border:1px solid #c6c6c6;background:#fff"></div>
<svg style="left:1041px;top:299px" width="24" height="22" viewBox="0 0 24 22"><path d="M12 2 L22.5 20 H1.5 Z" fill="#fbd9a8" stroke="#e8882a" stroke-width="2" stroke-linejoin="round"/><path d="M12 7.5 V14" stroke="#333" stroke-width="2"/><circle cx="12" cy="16.8" r="1.2" fill="#333"/></svg>
<div class="a" style="left:1157px;top:290px;width:145px;height:51px;border:5px solid #e0202a"></div>
</div>
<div class="a" style="left:1428px;top:379px;width:26px;height:498px;background:#f3f3f3;border-radius:13px"></div>
<svg style="left:1434px;top:384px" width="14" height="11" viewBox="0 0 14 11"><path d="M7 1 L13 10 H1 Z" fill="#6e6e6e" stroke="#6e6e6e" stroke-width="1.5" stroke-linejoin="round"/></svg>
<div class="a" style="left:1435px;top:425px;width:12px;height:257px;background:#727272;border-radius:6px"></div>
<svg style="left:1434px;top:860px" width="14" height="11" viewBox="0 0 14 11"><path d="M7 10 L13 1 H1 Z" fill="#6e6e6e" stroke="#6e6e6e" stroke-width="1.5" stroke-linejoin="round"/></svg>
<!-- END GRID -->
<!-- Tab bar -->
<div class="a" style="left:0;top:875px;width:1457px;height:48px;background:#e1ede8"></div>
<svg style="left:34px;top:890px" width="9" height="16" viewBox="0 0 9 16"><path d="M8 1 L1.5 8 L8 15" fill="none" stroke="#9a9a9a" stroke-width="1.5"/></svg>
<svg style="left:83px;top:890px" width="9" height="16" viewBox="0 0 9 16"><path d="M1 1 L7.5 8 L1 15" fill="none" stroke="#9a9a9a" stroke-width="1.5"/></svg>
<div class="a" style="left:177px;top:890px;font-size:19.6px;color:#333">Sheet1</div>
<div class="a" style="left:257px;top:885px;width:1px;height:28px;background:#c4cfca"></div>
<div class="a" style="left:264px;top:875px;width:89px;height:42px;background:#fff;border-radius:0 0 7px 7px"></div>
<div class="a" style="left:276px;top:885.5px;font-size:18.6px;font-weight:bold;color:#242424">Sheet2</div>
<div class="a" style="left:276px;top:910px;width:65px;height:3px;background:#107c41;border-radius:1px"></div>
<div class="a" style="left:359px;top:885px;width:1px;height:28px;background:#c4cfca"></div>
<svg style="left:423px;top:889px" width="17" height="17" viewBox="0 0 17 17"><path d="M8.5 0 V17 M0 8.5 H17" stroke="#333" stroke-width="1.6"/></svg>
<svg style="left:877px;top:890px" width="4" height="17" viewBox="0 0 4 17"><rect x="0.5" y="0" width="3" height="3" fill="#333"/><rect x="0.5" y="7" width="3" height="3" fill="#333"/><rect x="0.5" y="14" width="3" height="3" fill="#333"/></svg>
<div class="a" style="left:903px;top:884px;width:524px;height:27px;background:#f0f0f0;border-radius:13px"></div>
<svg style="left:910px;top:891px" width="11" height="14" viewBox="0 0 11 14"><path d="M1 7 L10 1 V13 Z" fill="#6e6e6e" stroke="#6e6e6e" stroke-width="1.2" stroke-linejoin="round"/></svg>
<div class="a" style="left:928px;top:891px;width:407px;height:13px;background:#727272;border-radius:7px"></div>
<svg style="left:1409px;top:891px" width="11" height="14" viewBox="0 0 11 14"><path d="M10 7 L1 1 V13 Z" fill="#6e6e6e" stroke="#6e6e6e" stroke-width="1.2" stroke-linejoin="round"/></svg>

<!-- Status bar -->
<div class="a" style="left:0;top:923px;width:1457px;height:30px;background:#f3f3f3"></div>
<div class="a" style="left:0;top:923px;width:1457px;height:1px;background:#fafafa"></div>
<div class="a" style="left:17px;top:932.5px;font-size:14.5px;color:#424242">Ready</div>
<svg style="left:86px;top:931px" width="22" height="19" viewBox="0 0 22 19"><path d="M1 18 V1 H21 V7 M1 4.5 H21 M4 7.5 H8.5 M4 10.5 H7.5 M4 13.5 H7 M1 18 H8" fill="none" stroke="#333" stroke-width="1.5"/><circle cx="15" cy="12.5" r="5.6" fill="#f3f3f3" stroke="#333" stroke-width="1.5"/><circle cx="15" cy="12.5" r="2.4" fill="#333"/></svg>
<svg style="left:133px;top:930px" width="22" height="21" viewBox="0 0 22 21"><circle cx="9.4" cy="2.8" r="2.1" fill="none" stroke="#333" stroke-width="1.3"/><path d="M6.5 8.5 C4.5 7.8 2.8 6.8 1.2 5.6 C0.4 4.7 1.4 3.4 2.5 4 C5 5.5 7 6 9.5 6 C12 6 14 5.5 16.5 4 C17.6 3.4 18.6 4.7 17.8 5.6 C16.2 6.9 14.4 7.9 12.5 8.5 V10.5 M6.5 8.5 V12 L5 18 C4.7 19.4 6.4 19.9 6.9 18.6 L9.2 13.2" fill="none" stroke="#333" stroke-width="1.3" stroke-linejoin="round"/><path d="M11.5 10.8 L20.8 19.8 M20.2 11.5 L11.8 19.8" stroke="#333" stroke-width="1.3"/></svg>
<div class="a" style="left:160px;top:932px;font-size:15.6px;font-weight:bold;color:#242424">Accessibility: Investigate</div>
<div class="a" style="left:995px;top:923px;width:59px;height:30px;background:#dcdcdc"></div>
<svg style="left:1012px;top:930px" width="22" height="19" viewBox="0 0 22 19"><path d="M1 1 H21 V18 H1 Z M1 6.7 H21 M1 12.3 H21 M7.7 1 V18 M14.3 1 V18" fill="none" stroke="#333" stroke-width="1.4"/></svg>
<svg style="left:1073px;top:930px" width="22" height="19" viewBox="0 0 22 19"><path d="M1 1 H21 V18 H1 Z M4 4 H18 V15 H4 Z M7 7.5 H15 M7 10 H15 M7 12.5 H15" fill="none" stroke="#333" stroke-width="1.4"/></svg>
<svg style="left:1133px;top:930px" width="22" height="19" viewBox="0 0 22 19"><path d="M1 1 H21 V18 H1 Z M7 1 V10 H15 V1" fill="none" stroke="#333" stroke-width="1.4"/></svg>
<div class="a" style="left:1183px;top:939px;width:10px;height:1.4px;background:#444"></div>
<div class="a" style="left:1201px;top:939px;width:149px;height:1.4px;background:#555"></div>
<div class="a" style="left:1272px;top:931px;width:7px;height:17px;background:#555;border-radius:1px"></div>
<svg style="left:1358px;top:934px" width="11" height="11" viewBox="0 0 11 11"><path d="M5.5 0 V11 M0 5.5 H11" stroke="#444" stroke-width="1.4"/></svg>
<div class="a" style="left:1389px;top:932.5px;font-size:14.9px;color:#424242">100%</div>
</body></html>
